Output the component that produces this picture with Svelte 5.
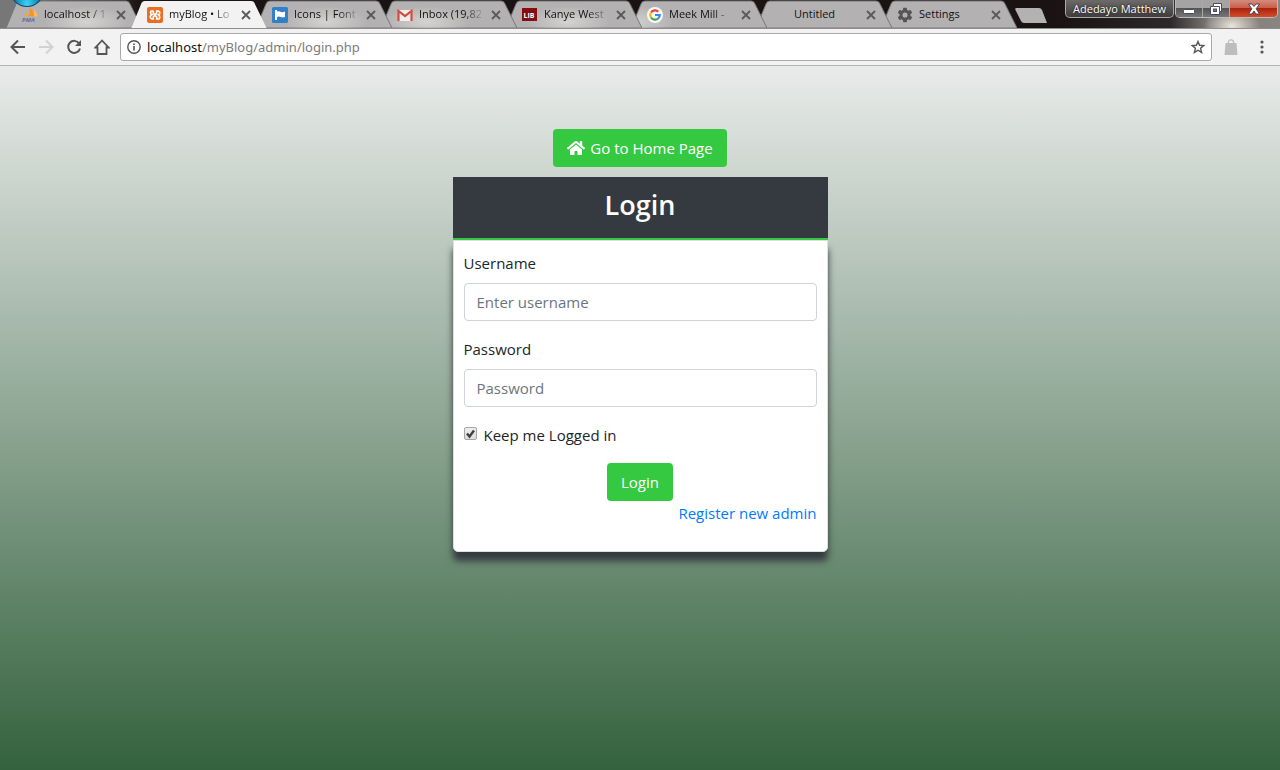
<script>
  const tabs = [
    { icon: 'pma', title: 'localhost / 1', glow: 80 },
    { icon: 'xampp', title: 'myBlog • Lo', active: true },
    { icon: 'flag', title: 'Icons | Font', glow: 70 },
    { icon: 'gmail', title: 'Inbox (19,82', glow: 46 },
    { icon: 'lib', title: 'Kanye West', glow: 62 },
    { icon: 'google', title: 'Meek Mill -', glow: 0 },
    { icon: '', title: 'Untitled' },
    { icon: 'gear', title: 'Settings' }
  ];
  let username = $state('');
  let password = $state('');
  let keep = $state(true);
</script>

<div class="window">
  <header class="browser">
    <div class="strip">
      <span class="orb"></span>
      <nav class="tabs" aria-label="Tabs">
        {#each tabs as tab, i}
          <div class="tab" class:active={tab.active} style:z-index={tab.active ? 9 : 8 - i}>
            <svg class="shape" viewBox="0 0 136 28" preserveAspectRatio="none" aria-hidden="true">
              <path d="M0 28 L10 4 Q11 1 14 1 H120 Q123 1 124 4 L136 28 Z" />
              {#if tab.glow !== undefined}
                <radialGradient id="glow{i}"><stop offset="0" stop-color="#dcdcd8" stop-opacity=".8" /><stop offset="1" stop-color="#dcdcd8" stop-opacity="0" /></radialGradient>
                <ellipse cx={tab.glow} cy="22" rx="42" ry="16" fill="url(#glow{i})" clip-path="url(#edge)" />
              {/if}
            </svg>
            <span class="favicon">
              {#if tab.icon === 'pma'}
                <svg viewBox="0 0 16 16"><path d="M6 1 Q6 6 1 9.500 Q4 9.500 6 8.500Z" fill="#f9a33a"/><path d="M7 0 Q12 4 12 9.500 Q9 8.500 6 9.500 Q9 5 7 0Z" fill="#f7931e"/><path d="M12 2 Q15 6 16 9.500 H12Z" fill="#fbb965"/><text x="0" y="15" font-size="6" font-weight="bold" font-style="italic" fill="#666b96">PMA</text></svg>
              {:else if tab.icon === 'xampp'}
                <svg viewBox="0 0 16 16"><rect width="16" height="16" rx="2" fill="#ea6d23"/><path d="M6.500 4H5Q3.500 4 3.500 5.500T5 7.500L3.800 8.500Q3.300 9 3.300 10.200T5 12H6.300V10L9.700 6V4H11Q12.700 4 12.700 5.700T11.500 7.700Q12.700 8.500 12.700 10.300T11 12H9.700V10L6.300 6V4" fill="none" stroke="#fff" stroke-width="1.700"/></svg>
              {:else if tab.icon === 'flag'}
                <svg viewBox="0 0 16 16"><rect width="16" height="16" rx="1.500" fill="#327fca"/><path d="M3 3H5V4.500Q7 4 8.500 4.800T13 4.500V10Q10.500 10.800 8.500 10T5 10V13H3Z" fill="#fff"/></svg>
              {:else if tab.icon === 'gmail'}
                <svg viewBox="0 0 16 16"><path d="M2 3H14V14H2Z" fill="#f1eeee"/><path d="M1.500 14V4L8 9L14.500 4V14" fill="none" stroke="#d54b3d" stroke-width="2.200"/></svg>
              {:else if tab.icon === 'lib'}
                <svg viewBox="0 0 16 16"><rect y="1" width="15" height="13" fill="#840d10"/><text x="1.500" y="10.500" font-size="7" font-weight="bold" fill="#fff">LIB</text></svg>
              {:else if tab.icon === 'google'}
                <svg viewBox="0 0 16 16"><circle cx="8" cy="8" r="8" fill="#f8f8f8"/><g fill="none" stroke-width="2.200"><path d="M4 5.500A4.800 4.800 0 0 1 11.300 4.600" stroke="#ea4335"/><path d="M4 5.500A4.800 4.800 0 0 0 4 10.500" stroke="#fbbc05"/><path d="M4 10.500A4.800 4.800 0 0 0 11.200 11.500" stroke="#34a853"/><path d="M11.200 11.500A4.800 4.800 0 0 0 12.800 8H8" stroke="#4285f4"/></g></svg>
              {:else if tab.icon === 'gear'}
                <svg viewBox="1 1 22 22"><path fill="#555" d="M19.430 12.980c.04-.32.07-.64.07-.98s-.03-.66-.07-.98l2.110-1.650c.19-.15.24-.42.12-.64l-2-3.460c-.12-.22-.39-.3-.61-.22l-2.490 1c-.52-.4-1.080-.73-1.690-.98l-.38-2.650A.49.49 0 0 0 14 2h-4c-.25 0-.46.18-.49.42l-.38 2.650c-.61.25-1.170.59-1.690.98l-2.490-1c-.23-.09-.49 0-.61.22l-2 3.460c-.13.22-.07.49.12.64l2.110 1.650c-.04.32-.07.65-.07.98s.03.66.07.98l-2.110 1.650c-.19.15-.24.42-.12.64l2 3.460c.12.22.39.3.61.22l2.490-1c.52.4 1.080.73 1.690.98l.38 2.650c.03.24.24.42.49.42h4c.25 0 .46-.18.49-.42l.38-2.650c.61-.25 1.170-.59 1.690-.98l2.490 1c.23.09.49 0 .61-.22l2-3.460c.12-.22.07-.49-.12-.64zM12 15.500a3.500 3.500 0 1 1 0-7 3.500 3.500 0 0 1 0 7z"/></svg>
              {/if}
            </span>
            <span class="title">{tab.title}</span>
            <button class="close" aria-label="Close tab"><svg viewBox="0 0 10 10"><path d="M1 1L9 9M9 1L1 9" stroke="#5a5a5a" stroke-width="1.800"/></svg></button>
          </div>
        {/each}
        <button class="newtab" aria-label="New tab"><svg viewBox="0 0 32 15"><path d="M1 0H24Q26 0 27 2L32 15H9Q7 15 6 13L0 1Z" fill="#b4b1b2"/></svg></button>
      </nav>
      <svg class="defs" width="0" height="0" aria-hidden="true"><clipPath id="edge"><path d="M1 28 L11 4 L14 2 H120 L123 4 L135 28 Z" /></clipPath></svg>
      <div class="caption">
        <button class="user">Adedayo Matthew</button>
        <div class="winbtns">
          <button aria-label="Minimize"><svg viewBox="0 0 14 12"><rect x="1.500" y="6.500" width="11" height="4" rx="1" fill="#fff" stroke="#4a4d5c"/></svg></button>
          <button aria-label="Restore"><svg viewBox="0 0 14 12"><path d="M4.500 .5H12.500V8.500H10.500V11.500H1.500V3.500H4.500Z" fill="#fff" stroke="#4a4d5c"/><rect x="4.500" y="6" width="3" height="2.500" fill="#777" stroke="#4a4d5c"/><path d="M5 3.500H10.500V8" fill="none" stroke="#4a4d5c"/></svg></button>
          <button class="red" aria-label="Close"><svg viewBox="0 0 14 12"><path d="M1.500 1H5L7 3.500L9 1H12.500L9.200 5.800L12.500 11H9L7 8L5 11H1.500L4.800 5.800Z" fill="#fff" stroke="#4b4754"/></svg></button>
        </div>
      </div>
    </div>
    <div class="toolbar">
      <button aria-label="Back"><svg viewBox="0 0 16 16"><path d="M15 8H2M8 1.500L1.500 8L8 14.500" fill="none" stroke="#555" stroke-width="2"/></svg></button>
      <button aria-label="Forward"><svg viewBox="0 0 16 16"><path d="M1 8H14M8 1.500L14.500 8L8 14.500" fill="none" stroke="#d2d2d2" stroke-width="2"/></svg></button>
      <button aria-label="Reload"><svg viewBox="0 0 16 16"><path d="M13.200 4.500A6 6 0 1 0 14 9.500" fill="none" stroke="#555" stroke-width="2"/><path d="M15 1V7H9Z" fill="#555"/></svg></button>
      <button aria-label="Home"><svg viewBox="0 0 16 16"><path d="M8 1.500L1.500 8.500H3.500V15H12.500V8.500H14.500Z" fill="none" stroke="#555" stroke-width="1.800"/></svg></button>
      <div class="address">
        <svg class="info" viewBox="0 0 14 14"><circle cx="7" cy="7" r="6.200" fill="none" stroke="#555" stroke-width="1.400"/><path d="M7 6V10.500M7 3.500V5" stroke="#555" stroke-width="1.600"/></svg>
        <span class="url">localhost<span>/myBlog/admin/login.php</span></span>
        <button class="star" aria-label="Bookmark"><svg viewBox="0 0 14 14"><path d="M7 1.500L8.600 5.300L12.800 5.600L9.600 8.300L10.600 12.400L7 10.200L3.400 12.400L4.400 8.300L1.200 5.600L5.400 5.300Z" fill="none" stroke="#555" stroke-width="1.400"/></svg></button>
      </div>
      <button class="bag" aria-label="Extension"><svg viewBox="0 0 14 16"><path d="M1.500 4H12.500L13.500 16H.5Z" fill="#bdbdbd"/><path d="M4.500 5V3Q4.500 .8 7 .8T9.500 3V5" fill="none" stroke="#bdbdbd" stroke-width="1.200"/></svg></button>
      <button class="more" aria-label="Menu"><svg viewBox="0 0 4 14"><g fill="#555"><circle cx="2" cy="2" r="1.600"/><circle cx="2" cy="7" r="1.600"/><circle cx="2" cy="12" r="1.600"/></g></svg></button>
    </div>
  </header>

  <main>
    <a class="btn" href="#home"><svg viewBox="0 0 576 512" aria-hidden="true"><path fill="#fff" d="M280.370 148.260L96 300.110V464a16 16 0 0 0 16 16l112.060-.29a16 16 0 0 0 15.920-16V368a16 16 0 0 1 16-16h64a16 16 0 0 1 16 16v95.640a16 16 0 0 0 16 16.050L464 480a16 16 0 0 0 16-16V300L295.670 148.260a12.190 12.190 0 0 0-15.300 0zM571.600 251.470L488 182.560V44.050a12 12 0 0 0-12-12h-56a12 12 0 0 0-12 12v72.610L318.470 43a48 48 0 0 0-61 0L4.340 251.470a12 12 0 0 0-1.600 16.900l25.500 31a12 12 0 0 0 16.900 1.650L280.370 107.370a12.190 12.190 0 0 1 15.300 0L530.900 301.100a12 12 0 0 0 16.900-1.600l25.500-31a12 12 0 0 0-1.700-17.030z"/></svg>Go to Home Page</a>
    <section class="login">
      <h1>Login</h1>
      <form onsubmit={(e) => e.preventDefault()}>
        <div class="group">
          <label for="username">Username</label>
          <input id="username" type="text" placeholder="Enter username" bind:value={username} />
        </div>
        <div class="group">
          <label for="password">Password</label>
          <input id="password" type="password" placeholder="Password" bind:value={password} />
        </div>
        <div class="check">
          <input id="keep" type="checkbox" bind:checked={keep} />
          <label for="keep">Keep me Logged in</label>
        </div>
        <button class="btn" type="submit">Login</button>
        <a class="register" href="#register">Register new admin</a>
      </form>
    </section>
  </main>
</div>

<style>
  :global(body) { margin: 0; }
  * { box-sizing: border-box; }
  button { font: inherit; border: 0; padding: 0; background: none; }
  svg { display: block; }
  .window {
    min-height: 100vh;
    display: flex;
    flex-direction: column;
    font-family: "Open Sans", "Segoe UI", sans-serif;
    font-size: 15px;
    line-height: 24px;
    color: #212529;
  }
  .strip {
    position: relative;
    display: flex;
    justify-content: space-between;
    height: 29px;
    padding-left: 6px;
    overflow: hidden;
    border-bottom: 1px solid #8f8d8d;
    background:
      radial-gradient(ellipse 28px 18px at right 48px bottom 2px, #e8e5da, #e8e5da00),
      linear-gradient(90deg, #777 0, #777 24px, #1a1415 140px, #1a1213 1060px, #2c2829 1170px, #807b78 1210px, #8a8580 1280px);
  }
  .orb {
    position: absolute;
    left: 11px;
    top: -22px;
    width: 32px;
    height: 29px;
    border-radius: 50%;
    background: radial-gradient(ellipse at 50% 95%, #3ed4f5, #087fb5 60%);
    border: 1px solid #17455c;
    z-index: 10;
  }
  .defs { position: absolute; }
  .tabs { display: flex; }
  .tab {
    position: relative;
    display: flex;
    align-items: center;
    width: 136px;
    height: 28px;
    margin-right: -11px;
    padding-left: 16px;
  }
  .tab.active { height: 29px; padding-bottom: 1px; }
  .shape { position: absolute; inset: 0; width: 100%; height: 100%; }
  .shape path { fill: #b4b1b2; stroke: #777; stroke-width: 1; }
  .active .shape path { fill: #f2f2f2; stroke: none; }
  .favicon { position: relative; width: 16px; height: 16px; margin-top: 2px; }
  .favicon svg { overflow: visible; }
  .title {
    position: relative;
    width: 66px;
    margin-left: 6px;
    font-size: 11px;
    line-height: 18px;
    color: #111;
    white-space: nowrap;
    mask-image: linear-gradient(90deg, #000 44px, #0000);
  }
  .tab:nth-child(8) .title, .tab:nth-child(7) .title { mask-image: none; }
  .close { position: relative; width: 10px; height: 10px; margin: 2px 0 0 6px; }
  .newtab { width: 32px; height: 15px; margin: 8px 0 0 9px; }
  .caption { display: flex; gap: 1px; margin-right: 2px; }
  .user {
    height: 18px;
    padding: 0 7px;
    border: 1px solid #aaa;
    border-top: 0;
    border-radius: 0 0 5px 5px;
    background: linear-gradient(#6d6a6a, #403c3d);
    font-size: 11px;
    line-height: 16px;
    color: #fff;
    text-shadow: 0 0 2px #000;
    white-space: nowrap;
  }
  .winbtns {
    display: flex;
    height: 18px;
    border: 1px solid #bbb;
    border-top: 0;
    border-radius: 0 0 5px 5px;
    overflow: hidden;
  }
  .winbtns button {
    width: 27px;
    display: grid;
    place-items: center;
    border-right: 1px solid #aaa;
    background: linear-gradient(#a5a3a3 0 45%, #555 50%, #777);
  }
  .winbtns svg { width: 14px; height: 12px; }
  .winbtns .red { width: 47px; border: 0; background: linear-gradient(#d58c7c 0, #c95f49 45%, #a92510 50%, #d64a28); }
  .toolbar {
    display: flex;
    align-items: center;
    height: 37px;
    padding: 0 16px 0 10px;
    gap: 12px;
    background: #f2f2f2;
    border-bottom: 1px solid #b6b4b6;
  }
  .toolbar > button { width: 16px; height: 16px; }
  .address {
    flex: 1;
    display: flex;
    align-items: center;
    height: 28px;
    margin-left: -2px;
    padding: 0 6px;
    border: 1px solid #a9a9a9;
    border-radius: 3px;
    background: #fff;
  }
  .info, .star { width: 14px; height: 14px; }
  .url { flex: 1; margin-left: 6px; font-family: "Noto Sans", sans-serif; font-size: 13px; line-height: 20px; color: #111; }
  .url span { color: #7b7b7b; }
  .toolbar .bag { width: 14px; }
  .toolbar .more { width: 4px; height: 14px; margin-left: 10px; }
  main {
    flex: 1;
    display: flex;
    flex-direction: column;
    align-items: center;
    gap: 10px;
    padding: 63px 16px 48px;
    background: linear-gradient(#e9ebea, #34623e);
  }
  .btn {
    display: flex;
    align-items: center;
    gap: 5px;
    height: 38px;
    padding: 0 14px;
    border-radius: 4px;
    background: #35c942;
    color: #fff;
    text-decoration: none;
  }
  .btn svg { width: 18px; height: 16px; }
  .login { width: 100%; max-width: 375px; }
  h1 {
    margin: 0;
    height: 63px;
    padding-top: 11px;
    border-bottom: 2px solid #35c942;
    background: #353a40;
    color: #fff;
    font-size: 27px;
    line-height: 34px;
    font-weight: 600;
    text-align: center;
  }
  form {
    display: flex;
    flex-direction: column;
    padding: 10px 10px 26px;
    border: 1px solid #dfdfdf;
    border-radius: 0 0 5px 5px;
    background: #fff;
    box-shadow: 0 9px 7px #353a40;
  }
  .group { display: flex; flex-direction: column; gap: 8px; margin-bottom: 16px; }
  .group input {
    width: 100%;
    height: 38px;
    padding: 0 12px;
    border: 1px solid #ced4da;
    border-radius: 4px;
    font: inherit;
    color: #495057;
  }
  .group input::placeholder { color: #6c757d; opacity: 1; }
  .check { display: flex; gap: 7px; margin-bottom: 16px; }
  .check input {
    appearance: none;
    width: 13px;
    height: 13px;
    margin: 4px 0 0;
    border: 1px solid #a5a5a5;
    border-radius: 2px;
    background: linear-gradient(#eee, #dcdcdc);
  }
  .check input:checked {
    background: url("data:image/svg+xml,%3Csvg xmlns='http://www.w3.org/2000/svg' viewBox='0 0 11 11'%3E%3Cpath d='M2 5.500L4.500 8.500L9 2.500' fill='none' stroke='%23404040' stroke-width='2.400'/%3E%3C/svg%3E") center / 11px no-repeat, linear-gradient(#eee, #dcdcdc);
  }
  form .btn { align-self: center; }
  .register { align-self: flex-end; color: #007bff; text-decoration: none; }
</style>
